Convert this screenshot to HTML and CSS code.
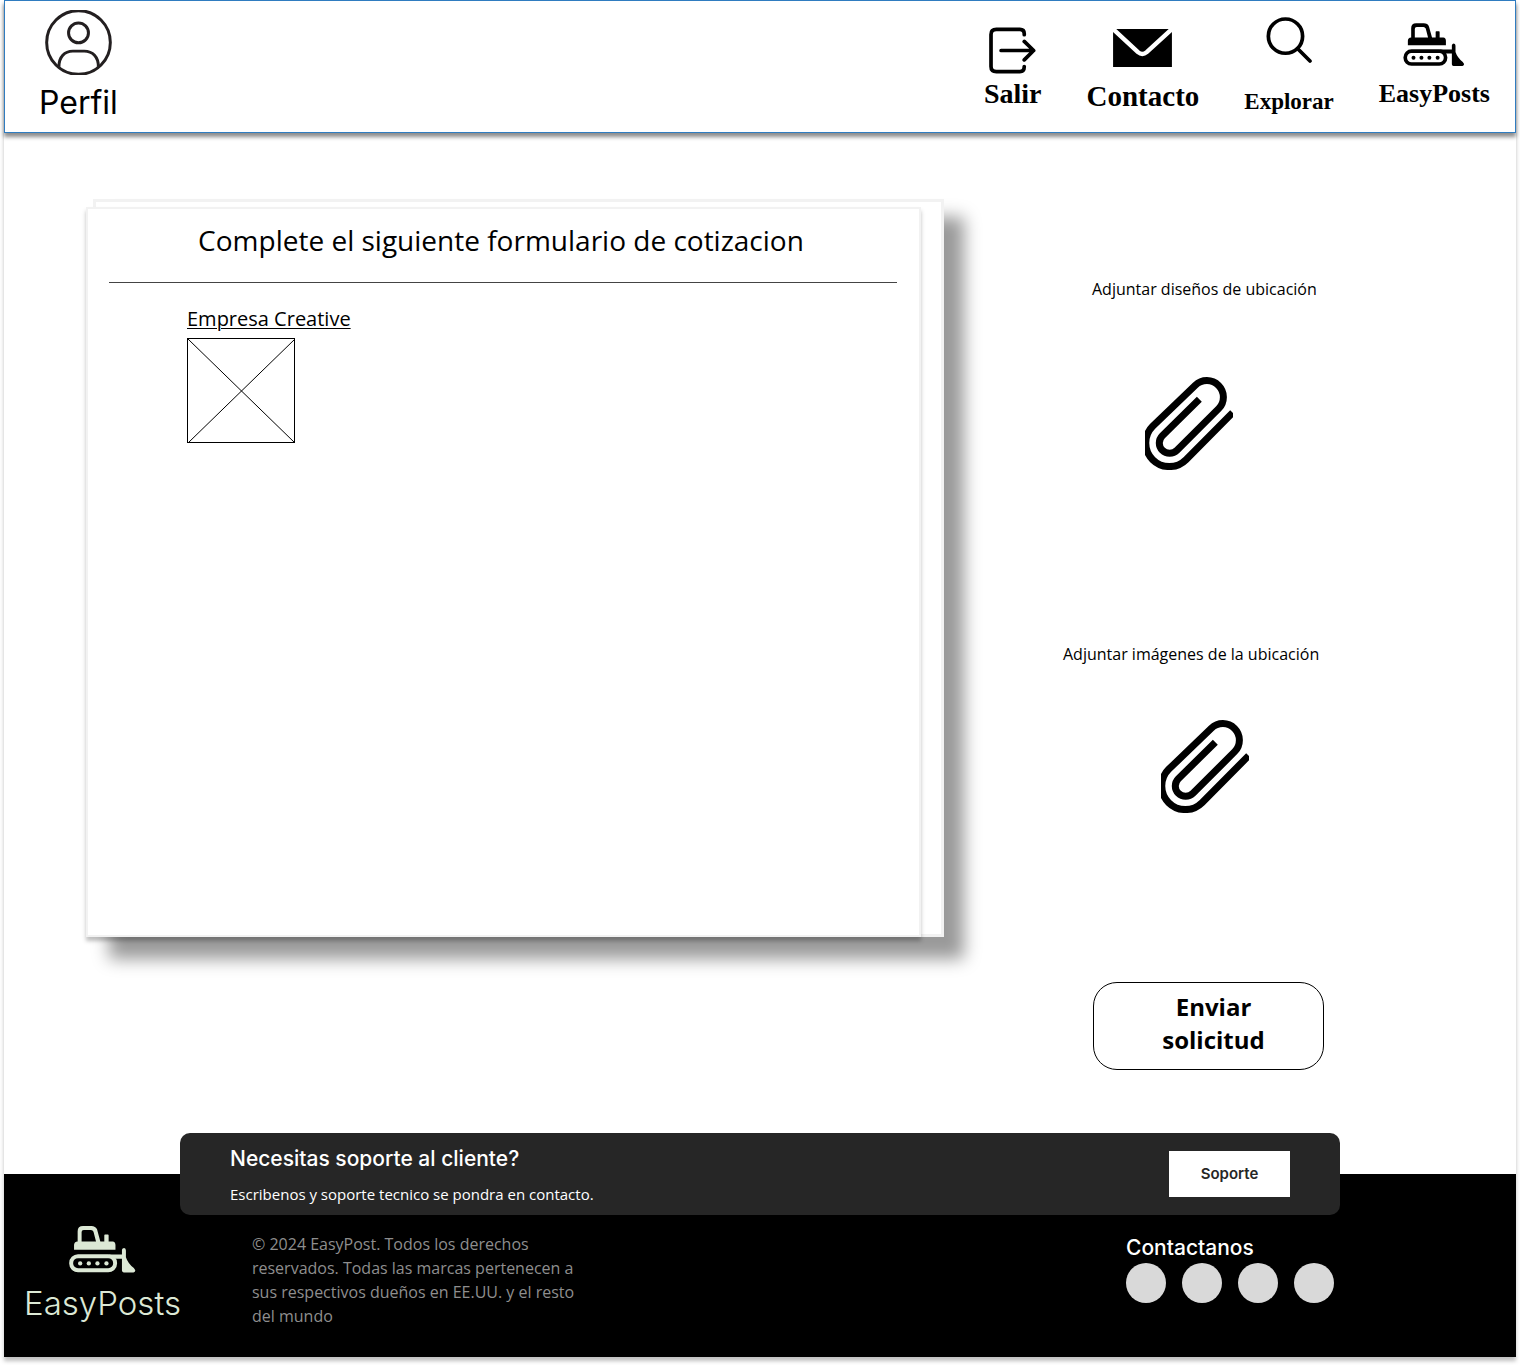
FILE: index.html
```html
<!DOCTYPE html>
<html lang="es">
<head>
<meta charset="utf-8">
<meta name="viewport" content="width=device-width, initial-scale=1">
<title>EasyPosts - Cotizacion</title>
<link rel="stylesheet" href="styles.css">
</head>
<body>
<svg width="0" height="0" class="sprite" aria-hidden="true">
  <symbol id="bulldozer" viewBox="526 68 186 130">
    <path fill="currentColor" fill-rule="evenodd" d="M540 135V122Q540 113 550 112V84Q550 69 565 69H588Q600 69 604 79L613 112H624V95Q624 93 626 93H634Q636 93 636 95V112H647Q655 113 655 122V135ZM561 112V86Q561 80 567 80H587Q592 80 594 85L601 112Z"/>
    <rect x="532" y="153" width="122" height="39" rx="19" fill="none" stroke="currentColor" stroke-width="11"/>
    <g fill="currentColor"><circle cx="557" cy="173" r="6"/><circle cx="581" cy="173" r="6"/><circle cx="605" cy="173" r="6"/><circle cx="630" cy="173" r="6"/>
    <path d="M636 148H673V135Q674 130 679 130Q684 131 684 137V156Q690 174 706 186L710 192Q710 197 705 198H678Q673 198 673 193V160H652Z"/></g>
  </symbol>
  <symbol id="clip" viewBox="45 51 264 279">
    <path fill="none" stroke="currentColor" stroke-width="21" d="M308 158L168 299A70.7 70.7 0 0 1 68 199L196 76A49.5 49.5 0 0 1 266 146L141 271A31.1 31.1 0 0 1 97 227L208 118"/>
  </symbol>
</svg>
<div class="page">
  <header class="topbar">
    <a class="profile" href="#perfil">
      <svg width="67" height="65" viewBox="136 29 202 196" fill="none" stroke="#231f20" stroke-width="9" aria-hidden="true"><circle cx="237" cy="127" r="96"/><circle cx="237" cy="98" r="30"/><path d="M178 200C178 170 195 153 220 153H254C280 153 297 170 297 200"/></svg>
      Perfil
    </a>
    <nav class="menu" aria-label="Principal">
      <a class="item exit" href="#salir">
        <svg width="47" height="47" viewBox="64 82 140 138" fill="none" stroke="currentColor" stroke-width="11" stroke-linecap="round" stroke-linejoin="round" aria-hidden="true"><path d="M169 104V101Q169 88 156 88H86Q70 88 70 103V199Q70 214 86 214H156Q169 214 169 199M100 151H197M169 124L197 151L169 179"/></svg>
        Salir
      </a>
      <a class="item contact" href="#contacto">
        <svg width="59" height="38" viewBox="436 87 175 113" aria-hidden="true"><path d="M436 87H611V200H436Z"/><path d="M436 87L510 156Q523 167 536 156L611 87" fill="none" stroke="#fff" stroke-width="13"/></svg>
        Contacto
      </a>
      <a class="item explore" href="#explorar">
        <svg width="46" height="46" viewBox="122 50 137 137" fill="none" stroke="currentColor" stroke-width="11" stroke-linecap="round" aria-hidden="true"><circle cx="180" cy="107" r="51"/><path d="M218 146L253 181"/></svg>
        Explorar
      </a>
      <a class="item brand" href="#inicio">
        <svg width="62" height="43" aria-hidden="true"><use href="#bulldozer"/></svg>
        EasyPosts
      </a>
    </nav>
  </header>

  <main class="content">
    <div class="sheets">
      <div class="sheet-back"></div>
      <section class="sheet">
        <h1>Complete el siguiente formulario de cotizacion</h1>
        <div class="company">
          <a href="#empresa">Empresa Creative</a>
          <svg width="109" height="106" viewBox="0 0 109 106" fill="none" stroke="#000" aria-hidden="true"><rect x="0.5" y="0.5" width="107" height="104" stroke-width="1"/><path d="M1 1L108 105M108 1L1 105"/></svg>
        </div>
      </section>
    </div>
    <aside class="side">
      <div class="attach designs">
        <span id="designs-label">Adjuntar diseños de ubicación</span>
        <button type="button" aria-labelledby="designs-label"><svg width="88" height="93" aria-hidden="true"><use href="#clip"/></svg></button>
      </div>
      <div class="attach images">
        <span id="images-label">Adjuntar imágenes de la ubicación</span>
        <button type="button" aria-labelledby="images-label"><svg width="88" height="93" aria-hidden="true"><use href="#clip"/></svg></button>
      </div>
      <button class="send" type="submit">Enviar<br>solicitud</button>
    </aside>
  </main>

  <footer class="footer">
    <section class="support">
      <div>
        <h2>Necesitas soporte al cliente?</h2>
        <p>Escribenos y soporte tecnico se pondra en contacto.</p>
      </div>
      <button type="button">Soporte</button>
    </section>
    <div class="footer-row">
      <a class="footer-logo" href="#inicio">
        <svg width="67" height="48" aria-hidden="true"><use href="#bulldozer"/></svg>
        EasyPosts
      </a>
      <p class="legal">© 2024 EasyPost. Todos los derechos reservados. Todas las marcas pertenecen a sus respectivos dueños en EE.UU. y el resto del mundo</p>
      <div class="social">
        <h2>Contactanos</h2>
        <ul><li></li><li></li><li></li><li></li></ul>
      </div>
    </div>
  </footer>
</div>
</body>
</html>
```
FILE: styles.css
```css
* { box-sizing: border-box; }

body {
  margin: 0;
  background: #fff;
  color: #000;
  font-family: "Open Sans", "Noto Sans", sans-serif;
  font-size: 16px;
  line-height: 24px;
}

h1, h2, p, ul { margin: 0; padding: 0; font-weight: 400; }
a { color: inherit; text-decoration: none; }
svg { display: block; flex: none; }
button { padding: 0; border: 0; background: none; color: inherit; font: inherit; cursor: pointer; }
.sprite { position: absolute; }

.page {
  margin: 0 4px 8px;
  box-shadow: 0 4px 4px rgba(0, 0, 0, .25);
}

/* Top bar */
.topbar {
  display: flex;
  justify-content: space-between;
  min-height: 133px;
  padding: 0 25px 0 34px;
  border: 1px solid #2f7cc0;
  background: #fff;
  box-shadow: 0 4px 4px rgba(0, 0, 0, .45);
}
.profile {
  display: flex;
  flex-direction: column;
  align-items: center;
  gap: 8px;
  padding-top: 9px;
  font: 400 32px/40px Inter, sans-serif;
}
.menu { display: flex; gap: 45px; }
.item {
  display: flex;
  flex-direction: column;
  align-items: center;
  font: 700 28px/32px "Liberation Serif", serif;
}
.exit { padding-top: 26px; gap: 4px; }
.contact { padding-top: 28px; gap: 13px; font-size: 29px; }
.explore { padding-top: 16px; gap: 23px; font-size: 23px; }
.brand { padding-top: 22px; gap: 12px; font-size: 26px; }

/* Quote form */
.content {
  display: grid;
  grid-template-columns: minmax(0, 1fr) 453px;
  column-gap: 119px;
  padding: 66px 0 104px 82px;
}
.sheets { display: grid; align-self: start; }
.sheet-back, .sheet { grid-area: 1 / 1; }
.sheet-back {
  margin-left: 7px;
  border: 3px solid #f2f2f2;
  background: #fff;
  box-shadow: 18px 20px 16px 2px rgba(0, 0, 0, .4);
}
.sheet {
  min-height: 730px;
  margin: 8px 23px 0 0;
  padding: 0 22px 0 21px;
  border: 2px solid #f2f2f2;
  background: #fff;
  box-shadow: 0 4px 4px rgba(0, 0, 0, .25);
}
.sheet h1 {
  padding: 11px 4px 22px 0;
  border-bottom: 1px solid #444;
  font-size: 28px;
  line-height: 40px;
  text-align: center;
}
.company {
  display: grid;
  justify-content: start;
  gap: 7px;
  padding: 24px 78px;
  font-size: 20px;
}
.company a {
  text-decoration: underline;
  text-decoration-thickness: 1px;
  text-underline-offset: 2px;
}

.side {
  display: flex;
  flex-direction: column;
  align-items: flex-start;
  padding-top: 78px;
}
.attach { display: flex; flex-direction: column; align-items: flex-start; }
.designs { gap: 76px; margin: 0 0 172px 29px; }
.designs button { margin-left: 53px; }
.images { gap: 54px; margin-bottom: 169px; }
.images button { margin-left: 98px; }
.send {
  width: 231px;
  min-height: 88px;
  margin-left: 30px;
  padding: 0 0 6px 10px;
  border: 1px solid #000;
  border-radius: 24px;
  font-size: 24px;
  font-weight: 700;
  line-height: 33px;
}

/* Footer */
.footer { min-height: 183px; padding-bottom: 28px; background: #000; color: #fff; }
.support {
  display: flex;
  align-items: center;
  justify-content: space-between;
  max-width: 1160px;
  min-height: 82px;
  margin: 0 auto;
  padding: 0 50px;
  border-radius: 10px;
  background: #262626;
  transform: translateY(-41px);
  margin-bottom: -41px;
}
.footer h2 { font: 500 21px/30px Inter, sans-serif; }
.support p { margin-top: 8px; font-size: 15px; }
.support div { padding-top: 2px; }
.support button {
  width: 121px;
  height: 46px;
  background: #fff;
  color: #262626;
  font: 600 15px/24px Inter, sans-serif;
}
.footer-row { display: flex; padding: 10px 182px 0 20px; }
.footer-logo {
  display: flex;
  flex-direction: column;
  align-items: center;
  gap: 10px;
  color: #dce8d5;
  font: 300 33px/40px Inter, sans-serif;
}
.legal {
  width: 330px;
  margin: 7px 0 0 71px;
  color: #8e8e8e;
}
.social { margin: 8px 0 0 auto; }
.social ul { display: flex; gap: 16px; list-style: none; }
.social li { width: 40px; height: 40px; border-radius: 50%; background: #d9d9d9; }
```
